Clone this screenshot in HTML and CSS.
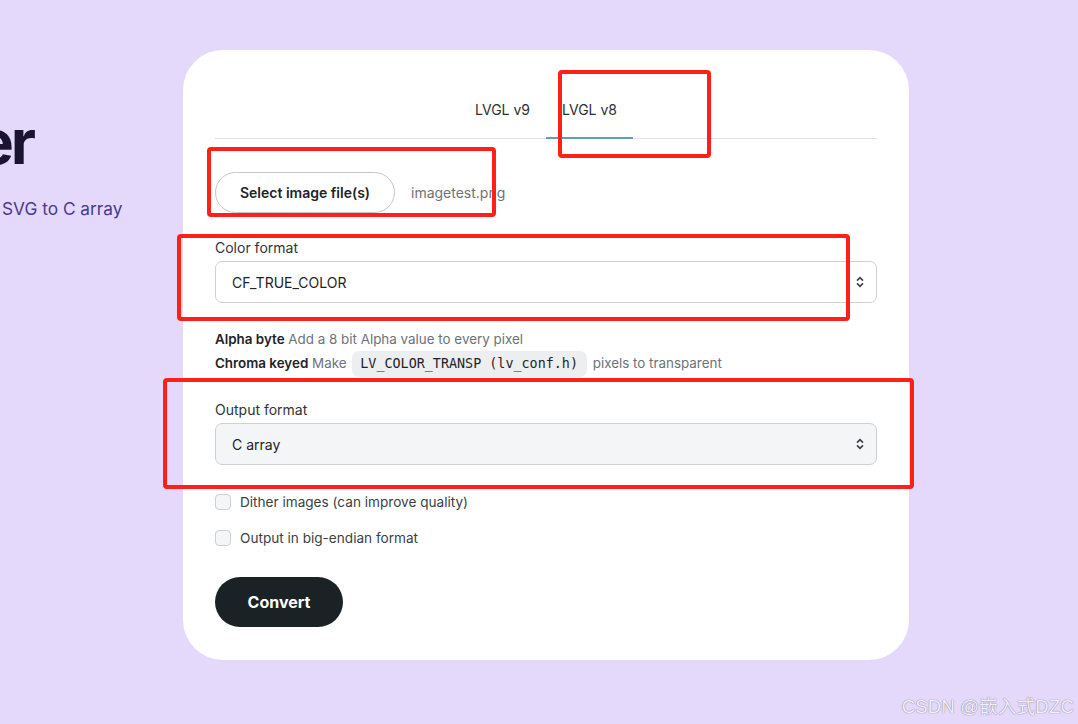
FILE: index.html
```html
<!DOCTYPE html>
<html lang="en">
<head>
<meta charset="utf-8">
<title>LVGL Image Converter</title>
<link rel="stylesheet" href="styles.css">
</head>
<body>
<div class="page">
  <section class="hero">
    <h1 class="hero-title">er</h1>
    <p class="hero-sub">SVG to C array</p>
  </section>

  <main class="card">
    <nav class="tabs">
      <div class="tab">LVGL v9</div>
      <div class="tab tab-active">LVGL v8</div>
    </nav>

    <div class="file-row">
      <button class="btn-file" type="button">Select image file(s)</button>
      <span class="file-name">imagetest.png</span>
    </div>

    <div class="field">
      <div class="field-label">Color format</div>
      <div class="select select-white">
        <span>CF_TRUE_COLOR</span>
        <svg class="select-arrows" width="8" height="12" viewBox="0 0 8 12"><path d="M1 4.6 L4 1.6 L7 4.6" fill="none" stroke="#3a4046" stroke-width="1.6"/><path d="M1 7.4 L4 10.4 L7 7.4" fill="none" stroke="#3a4046" stroke-width="1.6"/></svg>
      </div>
    </div>

    <div class="help">
      <div class="help-line"><b>Alpha byte</b> Add a 8 bit Alpha value to every pixel</div>
      <div class="help-line"><b>Chroma keyed</b> Make <code class="code">LV_COLOR_TRANSP (lv_conf.h)</code> pixels to transparent</div>
    </div>

    <div class="field field-output">
      <div class="field-label">Output format</div>
      <div class="select select-grey">
        <span>C array</span>
        <svg class="select-arrows" width="8" height="12" viewBox="0 0 8 12"><path d="M1 4.6 L4 1.6 L7 4.6" fill="none" stroke="#3a4046" stroke-width="1.6"/><path d="M1 7.4 L4 10.4 L7 7.4" fill="none" stroke="#3a4046" stroke-width="1.6"/></svg>
      </div>
    </div>

    <div class="checks">
      <label class="check"><span class="check-box"></span>Dither images (can improve quality)</label>
      <label class="check"><span class="check-box"></span>Output in big-endian format</label>
    </div>

    <button class="btn-convert" type="button">Convert</button>
  </main>
</div>

<div class="mark mark-tab"></div>
<div class="mark mark-file"></div>
<div class="mark mark-color"></div>
<div class="mark mark-output"></div>

<div class="watermark">CSDN @嵌入式DZC</div>
</body>
</html>
```

FILE: styles.css
```css
* { box-sizing: border-box; }

html, body {
  margin: 0;
  padding: 0;
  height: 100%;
}

body {
  background: #e4d9fb;
  font-family: Inter, "Noto Sans", "Liberation Sans", sans-serif;
  color: #212529;
  overflow: hidden;
  position: relative;
}

.page {
  display: flex;
  align-items: flex-start;
  padding-top: 50px;
}

.hero {
  width: 183px;
  flex: none;
  padding-top: 57px;
}

.hero-title {
  margin: 0 0 0 -23px;
  font-size: 62px;
  line-height: 70px;
  font-weight: 700;
  letter-spacing: -0.05em;
  color: #1a1430;
  white-space: nowrap;
}

.hero-sub {
  margin: 19px 0 0 2px;
  font-size: 17.3px;
  line-height: 26px;
  color: #4a3a8c;
  white-space: nowrap;
}

.card {
  width: 726px;
  flex: none;
  background: #ffffff;
  border-radius: 40px;
  padding: 32px 32px 33px;
}

.tabs {
  display: flex;
  justify-content: center;
  border-bottom: 1px solid #dee2e6;
}

.tab {
  font-size: 14px;
  line-height: 20px;
  padding: 18px 16px 17px;
  color: #2b3035;
  border-bottom: 2px solid transparent;
  margin-bottom: -1px;
}

.tab-active {
  border-bottom-color: #5aa5aa;
}

.file-row {
  display: flex;
  align-items: center;
  gap: 16px;
  margin-top: 33px;
}

.btn-file {
  height: 41px;
  width: 180px;
  border: 1px solid #c4c7ca;
  border-radius: 21px;
  background: #fff;
  font-family: inherit;
  font-size: 14px;
  font-weight: 600;
  color: #1f2326;
  padding: 0;
}

.file-name {
  font-size: 14px;
  color: #6c7379;
}

.field {
  margin-top: 25px;
}

.field-label {
  font-size: 14px;
  line-height: 20px;
  color: #2f3437;
  margin-bottom: 3px;
}

.select {
  height: 42px;
  border: 1px solid #ced1d4;
  border-radius: 7px;
  display: flex;
  align-items: center;
  justify-content: space-between;
  padding: 0 12px 0 16px;
  font-size: 14px;
  color: #1f2326;
}

.select-white { background: #ffffff; }
.select-grey { background: #f4f5f7; }

.select-arrows { display: block; }

.help {
  margin-top: 26px;
  font-size: 13.4px;
  color: #6c7379;
}

.help b {
  font-weight: 600;
  color: #1f2326;
}

.help-line {
  line-height: 20px;
}

.help-line + .help-line {
  margin-top: 1px;
  line-height: 26px;
}

.code {
  display: inline-block;
  font-family: "DejaVu Sans Mono", "Liberation Mono", monospace;
  font-size: 13.4px;
  line-height: 26px;
  background: #eceef0;
  color: #1f2326;
  border-radius: 7px;
  padding: 0 9px 0 8px;
  margin: 0 2px;
}

.field-output {
  margin-top: 23px;
}

.checks {
  margin-top: 27px;
  display: flex;
  flex-direction: column;
  gap: 16px;
}

.check {
  display: flex;
  align-items: center;
  gap: 9px;
  font-size: 13.6px;
  line-height: 20px;
  color: #3a3f44;
}

.check-box {
  width: 16px;
  height: 16px;
  border: 1px solid #cdd0d4;
  border-radius: 4px;
  background: #f4f5f7;
  flex: none;
}

.btn-convert {
  margin-top: 29px;
  height: 50px;
  width: 128px;
  border: none;
  border-radius: 25px;
  background: #1b2226;
  color: #ffffff;
  font-family: inherit;
  font-size: 16px;
  font-weight: 700;
  padding: 0;
  display: block;
}

.mark {
  position: absolute;
  border: 4px solid #ff2018;
  border-radius: 4px;
}

.mark-tab { left: 558px; top: 70px; width: 153px; height: 88px; }
.mark-file { left: 207px; top: 147px; width: 289px; height: 70px; }
.mark-color { left: 177px; top: 234px; width: 673px; height: 87px; }
.mark-output { left: 163px; top: 378px; width: 751px; height: 111px; }

.watermark {
  position: absolute;
  right: 4px;
  bottom: 6px;
  font-family: "Liberation Sans", "Noto Sans CJK SC", sans-serif;
  font-size: 18.5px;
  color: #f2eefc;
  text-shadow: 0 0 1px #8c8898, 0 0 1px #8c8898;
  letter-spacing: 0.2px;
}
```
